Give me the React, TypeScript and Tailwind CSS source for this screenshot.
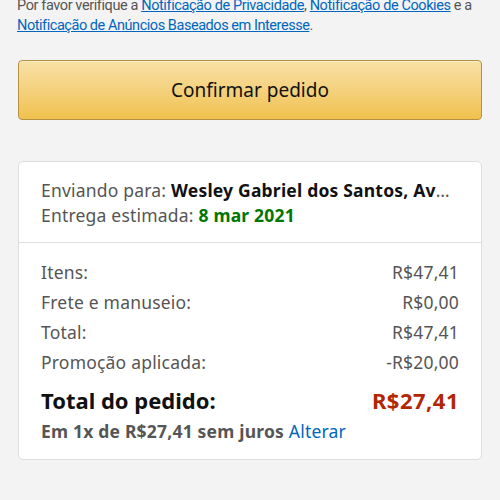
import React from "react";

const Row = ({ label, value }: { label: string; value: string }) => (
  <div className="flex justify-between leading-[30px]">
    <span>{label}</span>
    <span>{value}</span>
  </div>
);

export default function App() {
  return (
    <div
      className="w-[500px] h-[500px] overflow-hidden bg-[#f3f3f3] text-[#111]"
      style={{ fontFamily: "'Noto Sans', Roboto, sans-serif" }}
    >
      <div
        className="px-[17px] -mt-[4px] text-[14.5px] tracking-[-0.4px] leading-[20px] text-[#555]"
        style={{ fontFamily: "Roboto, sans-serif" }}
      >
        Por favor verifique a{" "}
        <a className="text-[#0066c0] underline">Notificação de Privacidade</a>,{" "}
        <a className="text-[#0066c0] underline">Notificação de Cookies</a> e a{" "}
        <a className="text-[#0066c0] underline tracking-[-0.45px]">Notificação de Anúncios Baseados em Interesse</a>.
      </div>

      <div className="px-[18px] mt-[24px]">
        <button className="w-full h-[60px] rounded-[4px] border border-[#b39146] bg-gradient-to-b from-[#f8e1a6] to-[#f0c14b] text-[19px] text-[#111] shadow-[0_1px_0_rgba(255,255,255,0.4)_inset]">
          Confirmar pedido
        </button>
      </div>

      <div className="mx-[18px] mt-[41px] bg-white border border-[#dddddd] rounded-[5px]">
        <div className="px-[22px] pt-[16px] pb-[14px] text-[17.5px] tracking-[0.2px] leading-[25px] text-[#555] border-b border-[#dddddd]">
          <div className="truncate">
            Enviando para: <b className="text-[#111]">Wesley Gabriel dos Santos, Avenida Brasil</b>
          </div>
          <div>
            Entrega estimada: <b className="text-[#007600]">8 mar 2021</b>
          </div>
        </div>
        <div className="px-[22px] pt-[14px] pb-[13px] text-[17.5px] tracking-[0.2px] text-[#555]">
          <Row label="Itens:" value="R$47,41" />
          <Row label="Frete e manuseio:" value="R$0,00" />
          <Row label="Total:" value="R$47,41" />
          <Row label="Promoção aplicada:" value="-R$20,00" />
          <div className="flex justify-between font-bold text-[22px] tracking-normal leading-[30px] mt-[8px] text-[#111]">
            <span>Total do pedido:</span>
            <span className="text-[#b12704] tracking-[0.5px]">R$27,41</span>
          </div>
          <div className="leading-[30px] font-bold mt-[1px]">
            Em 1x de R$27,41 sem juros <span className="font-normal text-[#0066c0]">Alterar</span>
          </div>
        </div>
      </div>
    </div>
  );
}
